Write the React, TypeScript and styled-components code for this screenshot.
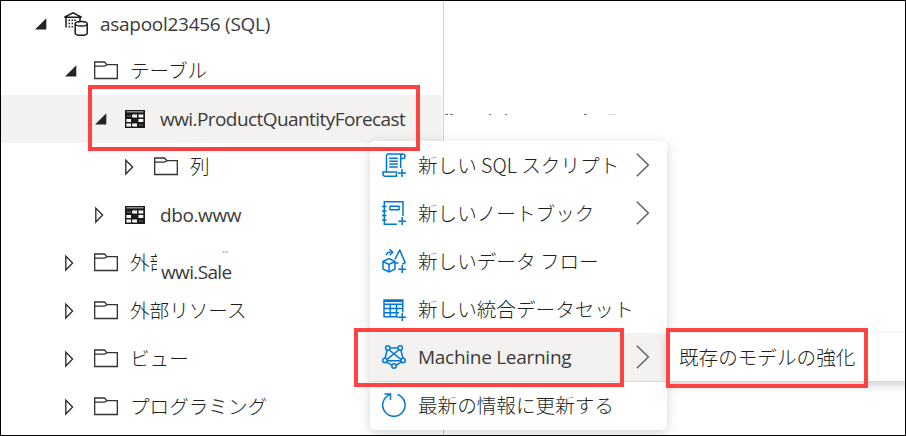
import React from 'react';
import styled, { createGlobalStyle, css } from 'styled-components';

const GlobalStyle = createGlobalStyle`
  * { box-sizing: border-box; }
  body { margin: 0; background: #fff; overflow: hidden; }
`;

const Page = styled.div`
  position: relative;
  width: 906px;
  height: 436px;
  border: 1px solid #000;
  background: #fff;
  overflow: hidden;
  font-family: 'Open Sans', 'Noto Sans CJK JP', sans-serif;
  color: #323130;
`;

const Tree = styled.div`
  width: 443px;
  height: 434px;
  display: flex;
  flex-direction: column;
  border-right: 1px solid #d2d0ce;
`;

const TreeRow = styled.div<{ $level: number; $selected?: boolean; $first?: boolean }>`
  flex: none;
  height: ${p => (p.$first ? 46 : 48)}px;
  padding-left: ${p => 33 + p.$level * 30}px;
  margin-right: 1px;
  display: flex;
  align-items: center;
  background: ${p => (p.$selected ? '#f3f2f1' : 'transparent')};
`;

const ArrowBox = styled.span`
  width: 30px;
  height: 18px;
  flex: none;
  svg { display: block; }
`;

const IconBox = styled.span<{ $raise?: boolean }>`
  width: 24px;
  height: 24px;
  flex: none;
  margin-right: 12px;
  margin-bottom: ${p => (p.$raise ? 2 : 0)}px;
  svg { display: block; }
`;

const Label = styled.span<{ $cjk?: boolean; $spacing?: number; $raise?: boolean; $clip?: number }>`
  white-space: pre;
  line-height: 28px;
  font-size: 19px;
  letter-spacing: ${p => p.$spacing ?? 0}px;
  margin-bottom: ${p => (p.$raise ? 2 : 0)}px;
  color: #3b3a39;
  ${p =>
    p.$cjk &&
    css`
      font-size: 19.6px;
      font-weight: 300;
      font-family: 'Noto Sans CJK JP', sans-serif;
      color: #201f1e;
    `}
  ${p =>
    p.$clip &&
    css`
      width: ${p.$clip}px;
      overflow: hidden;
    `}
`;

const DragPatch = styled.div`
  position: absolute;
  left: 156px;
  top: 251px;
  width: 110px;
  height: 36px;
  padding: 6px 0 0 4px;
  background: #fff;
  display: flex;
`;

const Menu = styled.div`
  position: absolute;
  left: 369px;
  top: 140px;
  width: 297px;
  height: 289px;
  display: flex;
  flex-direction: column;
  background: #fff;
  border-radius: 5px;
  box-shadow: 0 3px 12px rgba(0, 0, 0, 0.17);
`;

const MenuItem = styled.div<{ $active?: boolean }>`
  height: 48px;
  flex: none;
  padding: 0 17px 0 12px;
  display: flex;
  align-items: center;
  background: ${p => (p.$active ? '#f3f2f1' : 'transparent')};
  box-shadow: ${p => (p.$active ? '0 1px 0 #d8d6d4' : 'none')};
`;

const Chevron = styled.span`
  margin-left: auto;
  svg { display: block; }
`;

const SubMenu = styled.div`
  position: absolute;
  left: 666px;
  top: 332px;
  width: 260px;
  height: 48px;
  padding-left: 12px;
  display: flex;
  align-items: center;
  background: #fff;
  box-shadow: 0 4px 9px rgba(0, 0, 0, 0.2);
`;

const Highlight = styled.div<{ $x: number; $y: number; $w: number; $h: number }>`
  position: absolute;
  left: ${p => p.$x - 1}px;
  top: ${p => p.$y - 1}px;
  width: ${p => p.$w}px;
  height: ${p => p.$h}px;
  border: 4px solid #ff4343;
`;

const Residue = styled.svg<{ $x: number; $y: number }>`
  position: absolute;
  left: ${p => p.$x}px;
  top: ${p => p.$y}px;
`;

const Arrow = ({ open }: { open?: boolean }) => (
  <ArrowBox>
    <svg width="18" height="18" viewBox="0 0 18 18">
      {open ? (
        <path d="M12.3 3.2V14.4H1.1Z" fill="#252423" />
      ) : (
        <path d="M1.8 2.3V16L8.6 9.1Z" fill="none" stroke="#32313a" strokeWidth="1.4" />
      )}
    </svg>
  </ArrowBox>
);

const Folder = () => (
  <svg width="24" height="24" viewBox="0 0 24 24" fill="none" stroke="#323130" strokeWidth="1.3">
    <path d="M.7 20.5V4h9.8l2.4 2.7h10.4v13.8Z" />
    <path d="M.7 8.2h9.7l2.5-1.5" />
  </svg>
);

const TableIcon = () => (
  <svg width="24" height="24" viewBox="0 0 24 24">
    <path d="M1 3h20v18H1Z" fill="#1b1a19" />
    <path d="M2.5 4.8h17" stroke="#aaa" strokeWidth="1.2" />
    <g fill="#fff">
      <path d="M8.2 7.6h4.8v3H8.2zM14.5 7.6h4.8v3h-4.8zM2.4 12h4.6v3H2.4zM14.5 12h4.8v3h-4.8zM2.4 16.5h4.6v3H2.4zM8.2 16.5h4.8v3H8.2z" />
    </g>
    <path d="M3 9.1h4M15 18h4" stroke="#777" />
  </svg>
);

const PoolIcon = () => (
  <svg width="24" height="24" viewBox="0 0 24 24" fill="none" stroke="#1b1a19" strokeWidth="1.5">
    <path d="M2 15.5V5.2H.5L9 .8l8.5 4.4H1.5M16 5v4" />
    <path d="M5.3 7.5v8M8.3 7.5v8M11 7.5v2" strokeDasharray="1.6 1.6" />
    <path d="M11.2 11.7v9.6c0 1.2 2.6 2 6 2s6-.8 6-2v-9.6" fill="#fff" />
    <ellipse cx="17.2" cy="11.7" rx="6" ry="2.3" fill="#fff" />
  </svg>
);

const Blue = ({ children }: { children: React.ReactNode }) => (
  <svg width="24" height="24" viewBox="0 0 24 24" fill="none" stroke="#0078d4" strokeWidth="1.5">
    {children}
  </svg>
);

const ScriptIcon = () => (
  <Blue>
    <path d="M4.5 19V3.2C4.5 1.7 5.2 1 6.5 1h14c1.5 0 2.5.8 2.5 2.2s-.8 2.4-2.2 2.4h-2M18.7 15V3.4c0-1.5.6-2.4 1.8-2.4" />
    <path d="M15.5 19H1v1.8c0 1.5.8 2.4 2 2.4h12.2c-1.2-.5-1.3-2.2-.2-3" />
    <path d="M7.3 5.3h8.5M7.3 8.2h8.5M7.3 11.1h8.5M7.3 14h8.5M20 16v8M16 20h8" />
  </Blue>
);

const NotebookIcon = () => (
  <Blue>
    <path d="M15 23.2H2.3V.8H21V15" />
    <path d="M8 5.2h9v3.5H8zM0 5.5h4.5M0 10h4.5M0 14.5h4.5M0 19h4.5M20.2 16v8M16.2 20.2H24" />
  </Blue>
);

const FlowIcon = () => (
  <Blue>
    <path d="m1 12.5 6-3 6 3v7.5l-6 3-6-3Zm0 0 6 3 6-3M7 15.5V23" />
    <path d="M4.2 6.3c.4-2.3 2-3.4 5.4-3.2M7.6.3l3.1 2.9-3 3" />
    <path d="m12.8 10.3 5-9.2 5.3 12.4c-.7.9-1.7 1.4-2.9 1.5M12.5 14h4M20.2 16v8M16.2 20.2H24" />
  </Blue>
);

const DatasetIcon = () => (
  <Blue>
    <path d="M16 19.8H2V3h18.8v12.6M2 4.2h18.8M2 7.2h18.8M2 11.5h18.8M2 15.7h15M8.2 7v12.5M14.5 7v12.5M20.2 16v8M16.2 20.2H24" />
  </Blue>
);

const LearningIcon = () => (
  <Blue>
    <path d="M8 3h8M5.2 5 3 13.3M18.8 5 21 13.3M7.2 5l11.7 9.4M16.8 5 5 14.3M5 15.8h14M4.7 17.2l5 3M19.3 17.2l-5 3" />
    <g fill="#f3f2f1">
      <circle cx="5.8" cy="3" r="2.2" />
      <circle cx="18.2" cy="3" r="2.2" />
      <circle cx="2.9" cy="15.5" r="2.2" />
      <circle cx="21.1" cy="15.5" r="2.2" />
      <circle cx="12" cy="21" r="2.2" />
    </g>
  </Blue>
);

const RefreshIcon = () => (
  <Blue>
    <path d="M15.5 1.5A11.2 11.2 0 1 1 8 1.6M2.5.9h6v6" />
  </Blue>
);

const Next = () => (
  <Chevron>
    <svg width="14" height="24" viewBox="0 0 14 24" fill="none" stroke="#605e5c" strokeWidth="1.4">
      <path d="M.8.8 12.4 12 .8 23.2" />
    </svg>
  </Chevron>
);

type Node = {
  level: number;
  text: string;
  icon: 'pool' | 'folder' | 'table';
  open?: boolean;
  selected?: boolean;
  cjk?: boolean;
  spacing?: number;
  clip?: number;
};

const nodes: Node[] = [
  { level: 0, text: 'asapool23456 (SQL)', icon: 'pool', open: true, spacing: -0.28 },
  { level: 1, text: 'テーブル', icon: 'folder', open: true, cjk: true },
  { level: 2, text: 'wwi.ProductQuantityForecast', icon: 'table', open: true, selected: true, spacing: -0.57 },
  { level: 3, text: '列', icon: 'folder', cjk: true },
  { level: 2, text: 'dbo.www', icon: 'table', spacing: -0.4 },
  { level: 1, text: '外部', icon: 'folder', cjk: true, clip: 28 },
  { level: 1, text: '外部リソース', icon: 'folder', cjk: true },
  { level: 1, text: 'ビュー', icon: 'folder', cjk: true },
  { level: 1, text: 'プログラミング', icon: 'folder', cjk: true },
];

const treeIcons = { pool: <PoolIcon />, folder: <Folder />, table: <TableIcon /> };

const items = [
  { text: '新しい SQL スクリプト', icon: <ScriptIcon />, cjk: true, more: true },
  { text: '新しいノートブック', icon: <NotebookIcon />, cjk: true, more: true },
  { text: '新しいデータ フロー', icon: <FlowIcon />, cjk: true },
  { text: '新しい統合データセット', icon: <DatasetIcon />, cjk: true },
  { text: 'Machine Learning', icon: <LearningIcon />, more: true, active: true, spacing: -0.28 },
  { text: '最新の情報に更新する', icon: <RefreshIcon />, cjk: true },
];

export default function App() {
  return (
    <>
      <GlobalStyle />
      <Page>
        <Tree>
          {nodes.map((n, i) => (
            <TreeRow key={n.text} $level={n.level} $selected={n.selected} $first={i === 0}>
              <Arrow open={n.open} />
              <IconBox $raise={n.icon === 'folder'}>{treeIcons[n.icon]}</IconBox>
              <Label $cjk={n.cjk} $raise={n.cjk} $spacing={n.spacing} $clip={n.clip}>
                {n.text}
              </Label>
            </TreeRow>
          ))}
        </Tree>
        <DragPatch>
          <Label $spacing={-0.65}>wwi.Sale</Label>
        </DragPatch>
        <Residue $x={221} $y={250} width="8" height="2" viewBox="0 0 8 2">
          <path d="M.5 1h2M3.8 1h2" stroke="#777" />
        </Residue>
        <Residue $x={442} $y={112} width="180" height="3" viewBox="0 0 180 3">
          <path d="M2 1.5h3M7 1.5h3M46 1.5h2M62 1.5h2M141 1.5h3" stroke="#777" />
          <path d="M165 1.5h8" stroke="#ddd" />
        </Residue>
        <Menu>
          {items.map(m => (
            <MenuItem key={m.text} $active={m.active}>
              <IconBox>{m.icon}</IconBox>
              <Label $cjk={m.cjk} $spacing={m.spacing}>{m.text}</Label>
              {m.more && <Next />}
            </MenuItem>
          ))}
        </Menu>
        <SubMenu>
          <Label $cjk>既存のモデルの強化</Label>
        </SubMenu>
        <Highlight $x={88} $y={85} $w={332} $h={66} />
        <Highlight $x={354} $y={328} $w={270} $h={59} />
        <Highlight $x={666} $y={328} $w={202} $h={60} />
      </Page>
    </>
  );
}
